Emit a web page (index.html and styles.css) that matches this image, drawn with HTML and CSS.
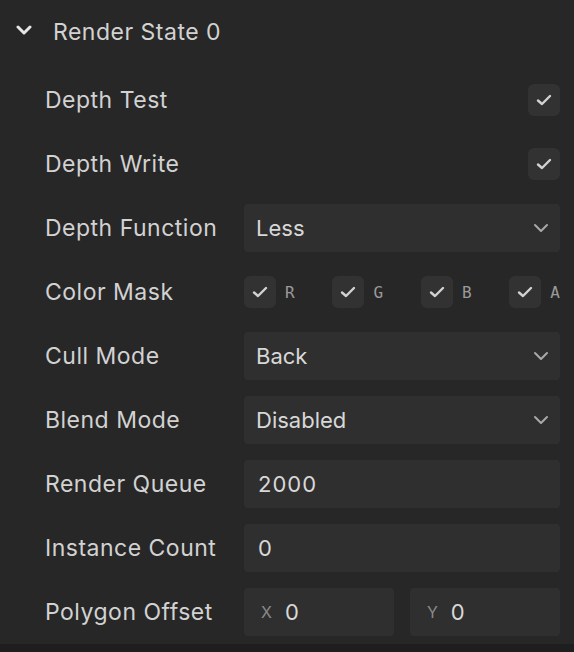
FILE: index.html
```html
<!DOCTYPE html>
<html lang="en">
<head>
    <meta charset="UTF-8">
    <meta name="viewport" content="width=device-width, initial-scale=1.0">
    <title>Render State</title>
    <link rel="stylesheet" href="styles.css">
</head>
<body>
    <div class="panel">
        <div class="group-header">
            <svg class="caret" width="16" height="10" viewBox="0 0 16 10">
                <polyline points="2,2 8,8 14,2" fill="none" stroke="#e6e6e6" stroke-width="3" stroke-linecap="round" stroke-linejoin="round" />
            </svg>
            <span class="group-title">Render State 0</span>
        </div>

        <div class="rows">
            <div class="row">
                <div class="label">Depth Test</div>
                <div class="control end">
                    <span class="check">
                        <svg width="16" height="12" viewBox="0 0 16 12"><polyline points="2,6.5 6,10 14,2" fill="none" stroke="#d2d2d2" stroke-width="2.4" stroke-linecap="round" stroke-linejoin="round" /></svg>
                    </span>
                </div>
            </div>

            <div class="row">
                <div class="label">Depth Write</div>
                <div class="control end">
                    <span class="check">
                        <svg width="16" height="12" viewBox="0 0 16 12"><polyline points="2,6.5 6,10 14,2" fill="none" stroke="#d2d2d2" stroke-width="2.4" stroke-linecap="round" stroke-linejoin="round" /></svg>
                    </span>
                </div>
            </div>

            <div class="row">
                <div class="label">Depth Function</div>
                <div class="control field select">
                    <span class="value">Less</span>
                    <svg class="arrow" width="16" height="10" viewBox="0 0 16 10"><polyline points="2,2 8,8 14,2" fill="none" stroke="#a8a8a8" stroke-width="2" stroke-linecap="round" stroke-linejoin="round" /></svg>
                </div>
            </div>

            <div class="row">
                <div class="label">Color Mask</div>
                <div class="control mask">
                    <div class="mask-item">
                        <span class="check"><svg width="16" height="12" viewBox="0 0 16 12"><polyline points="2,6.5 6,10 14,2" fill="none" stroke="#d2d2d2" stroke-width="2.4" stroke-linecap="round" stroke-linejoin="round" /></svg></span>
                        <span class="channel">R</span>
                    </div>
                    <div class="mask-item">
                        <span class="check"><svg width="16" height="12" viewBox="0 0 16 12"><polyline points="2,6.5 6,10 14,2" fill="none" stroke="#d2d2d2" stroke-width="2.4" stroke-linecap="round" stroke-linejoin="round" /></svg></span>
                        <span class="channel">G</span>
                    </div>
                    <div class="mask-item">
                        <span class="check"><svg width="16" height="12" viewBox="0 0 16 12"><polyline points="2,6.5 6,10 14,2" fill="none" stroke="#d2d2d2" stroke-width="2.4" stroke-linecap="round" stroke-linejoin="round" /></svg></span>
                        <span class="channel">B</span>
                    </div>
                    <div class="mask-item">
                        <span class="check"><svg width="16" height="12" viewBox="0 0 16 12"><polyline points="2,6.5 6,10 14,2" fill="none" stroke="#d2d2d2" stroke-width="2.4" stroke-linecap="round" stroke-linejoin="round" /></svg></span>
                        <span class="channel">A</span>
                    </div>
                </div>
            </div>

            <div class="row">
                <div class="label">Cull Mode</div>
                <div class="control field select">
                    <span class="value">Back</span>
                    <svg class="arrow" width="16" height="10" viewBox="0 0 16 10"><polyline points="2,2 8,8 14,2" fill="none" stroke="#a8a8a8" stroke-width="2" stroke-linecap="round" stroke-linejoin="round" /></svg>
                </div>
            </div>

            <div class="row">
                <div class="label">Blend Mode</div>
                <div class="control field select">
                    <span class="value">Disabled</span>
                    <svg class="arrow" width="16" height="10" viewBox="0 0 16 10"><polyline points="2,2 8,8 14,2" fill="none" stroke="#a8a8a8" stroke-width="2" stroke-linecap="round" stroke-linejoin="round" /></svg>
                </div>
            </div>

            <div class="row">
                <div class="label">Render Queue</div>
                <div class="control field">
                    <span class="value num">2000</span>
                </div>
            </div>

            <div class="row">
                <div class="label">Instance Count</div>
                <div class="control field">
                    <span class="value num">0</span>
                </div>
            </div>

            <div class="row">
                <div class="label">Polygon Offset</div>
                <div class="control pair">
                    <div class="field">
                        <span class="axis">X</span>
                        <span class="value num">0</span>
                    </div>
                    <div class="field">
                        <span class="axis">Y</span>
                        <span class="value num">0</span>
                    </div>
                </div>
            </div>
        </div>
    </div>
    <div class="footer"></div>
</body>
</html>
```

FILE: styles.css
```css
body {
    margin: 0;
    padding: 0;
    background-color: #272727;
    font-family: Inter, "Noto Sans", sans-serif;
    color: #d2d2d2;
}

.panel {
    padding: 0 14px 8px 0;
}

.group-header {
    display: flex;
    align-items: center;
    height: 64px;
}

.caret {
    margin-left: 16px;
    margin-right: 21px;
    margin-top: -4px;
}

.group-title {
    font-size: 23px;
    letter-spacing: 0.5px;
    color: #d2d2d2;
}

.rows {
    display: flex;
    flex-direction: column;
    gap: 16px;
    padding-top: 12px;
}

.row {
    display: flex;
    align-items: center;
    height: 48px;
}

.label {
    width: 199px;
    padding-left: 45px;
    font-size: 23px;
    letter-spacing: 0.5px;
    color: #d2d2d2;
}

.control {
    flex: 1;
    height: 48px;
    display: flex;
    align-items: center;
}

.control.end {
    justify-content: flex-end;
}

.check {
    width: 32px;
    height: 32px;
    border-radius: 6px;
    background-color: #323232;
    display: flex;
    align-items: center;
    justify-content: center;
}

.field {
    background-color: #2f2f2f;
    border-radius: 4px;
    display: flex;
    align-items: center;
    padding: 0 12px;
    box-sizing: border-box;
    height: 48px;
}

.select {
    justify-content: space-between;
}

.value {
    font-size: 22px;
    color: #d8d8d8;
}

.value.num {
    letter-spacing: 1px;
    padding-left: 2px;
}

.arrow {
    margin-right: -1px;
}

.mask {
    justify-content: space-between;
}

.mask-item {
    display: flex;
    align-items: center;
    gap: 9px;
}

.channel {
    font-family: "DejaVu Sans Mono", monospace;
    font-size: 16px;
    color: #9a9a9a;
}

.pair {
    gap: 16px;
}

.pair .field {
    flex: 1;
    padding-left: 17px;
}

.axis {
    font-size: 16px;
    color: #8a8a8a;
    margin-right: 11px;
}

.footer {
    height: 20px;
    background-color: #1e1e1e;
}
```
